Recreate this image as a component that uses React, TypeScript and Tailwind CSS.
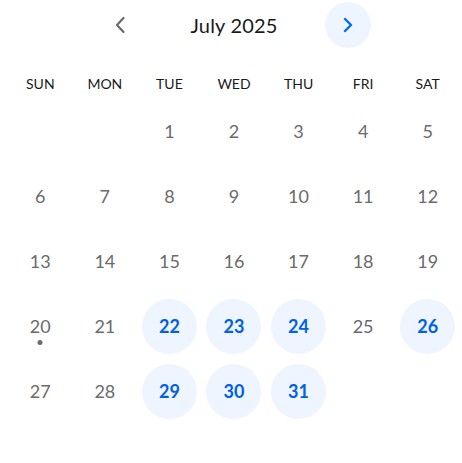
import React from "react";

const days = ["SUN", "MON", "TUE", "WED", "THU", "FRI", "SAT"];
const available = new Set([22, 23, 24, 26, 29, 30, 31]);

export default function App() {
  const cells: (number | null)[] = [null, null];
  for (let d = 1; d <= 31; d++) cells.push(d);
  while (cells.length % 7) cells.push(null);
  const rows: (number | null)[][] = [];
  for (let i = 0; i < cells.length; i += 7) rows.push(cells.slice(i, i + 7));

  return (
    <div
      className="w-[462px] h-[463px] bg-white pl-2 pr-[2px]"
      style={{ fontFamily: "Lato, 'Noto Sans', sans-serif" }}
    >
      <div className="h-[50px] flex items-center justify-center gap-[47px]">
        <button className="w-[46px] h-[46px] rounded-full flex items-center justify-center text-[#6b6b6b]">
          <svg width="12" height="18" viewBox="0 0 12 18" fill="none">
            <path d="M9.5 2 L3 9 L9.5 16" stroke="currentColor" strokeWidth="2.2" strokeLinecap="round" strokeLinejoin="round" />
          </svg>
        </button>
        <div className="w-[88px] text-center text-[20px] tracking-[0.2px] text-[#1a1a1a] whitespace-nowrap">July 2025</div>
        <button className="w-[46px] h-[46px] rounded-full bg-[#eef5ff] flex items-center justify-center text-[#0069ff]">
          <svg width="12" height="18" viewBox="0 0 12 18" fill="none">
            <path d="M3 3 L9 9 L3 15" stroke="currentColor" strokeWidth="2.4" strokeLinecap="round" strokeLinejoin="round" />
          </svg>
        </button>
      </div>
      <div className="h-12 pt-5 grid grid-cols-7 items-center text-[14px] leading-4 text-[#1a1a1a]">
        {days.map((d) => (
          <div key={d} className="text-center">{d}</div>
        ))}
      </div>
      <div className="pt-[1px]">
        {rows.map((row, ri) => (
          <div key={ri} className="grid grid-cols-7 h-[65px]">
            {row.map((d, ci) => (
              <div key={ci} className="flex items-center justify-center">
                {d !== null &&
                  (available.has(d) ? (
                    <div className="w-[55px] h-[55px] rounded-full bg-[#eef5ff] flex items-center justify-center text-[18px] font-bold text-[#0060e6]">
                      {d}
                    </div>
                  ) : (
                    <div className="relative w-[55px] h-[55px] flex items-center justify-center text-[18px] text-[#6b6b6b]">
                      {d}
                      {d === 20 && (
                        <span className="absolute left-1/2 top-[41px] -translate-x-1/2 w-[5px] h-[5px] rounded-full bg-[#6b6b6b]" />
                      )}
                    </div>
                  ))}
              </div>
            ))}
          </div>
        ))}
      </div>
    </div>
  );
}
